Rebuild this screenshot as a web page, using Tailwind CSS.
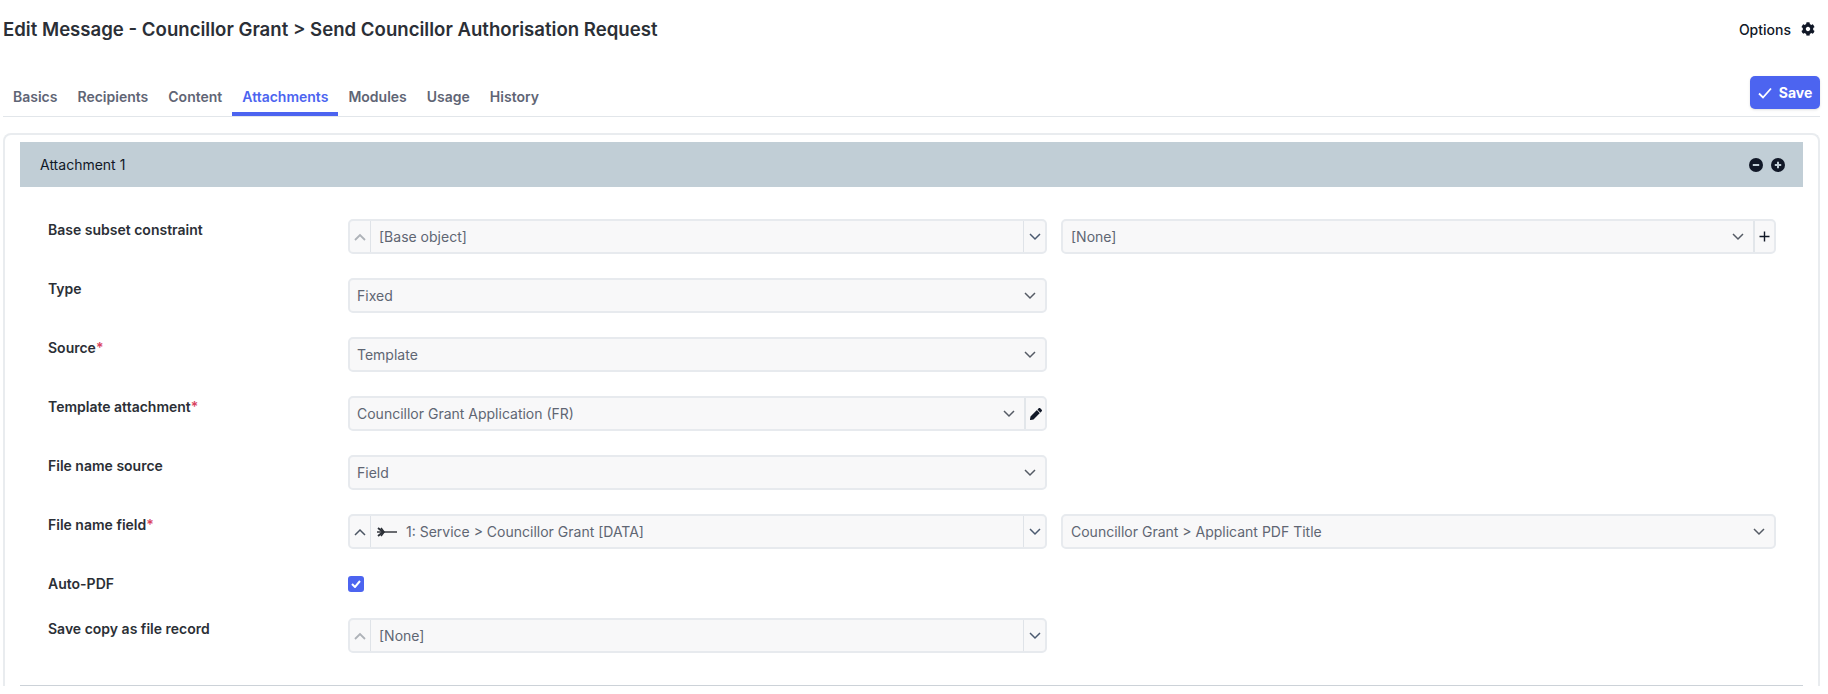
<!DOCTYPE html>
<html lang="en">
<head>
  <meta charset="UTF-8" />
  <title>Edit Message</title>
  <script src="https://cdn.jsdelivr.net/npm/@tailwindcss/browser@4"></script>
</head>
<body class="h-[694px] overflow-hidden bg-white font-['Inter',sans-serif] text-[#2b2f36]">
  <div class="pl-[3px] pr-[8px]">
    <!-- header -->
    <div class="flex h-[58px] items-center justify-between">
      <h1 class="pt-[2px] text-[18.6px] font-semibold">Edit Message - Councillor Grant &gt; Send Councillor Authorisation Request</h1>
      <div class="mr-[5px] flex items-center gap-[10px] text-[14px] font-medium text-[#111827]">
        Options
        <svg class="h-[14px] w-[14px]" viewBox="0 0 512 512" fill="#111827"><path d="M487.4 315.7l-42.6-24.6c4.3-23.2 4.3-47 0-70.2l42.6-24.6c4.9-2.8 7.1-8.6 5.5-14-11.1-35.6-30-67.8-54.7-94.6-3.8-4.1-10-5.1-14.8-2.3L380.8 110c-17.9-15.4-38.5-27.3-60.8-35.1V25.8c0-5.6-3.9-10.5-9.4-11.7-36.7-8.2-74.3-7.8-109.2 0-5.5 1.2-9.4 6.1-9.4 11.7V75c-22.2 7.9-42.8 19.8-60.8 35.1L88.7 85.5c-4.9-2.8-11-1.9-14.8 2.3-24.7 26.7-43.6 58.9-54.7 94.6-1.7 5.4.6 11.2 5.5 14L67.3 221c-4.3 23.2-4.3 47 0 70.2l-42.6 24.6c-4.9 2.8-7.1 8.6-5.5 14 11.1 35.6 30 67.8 54.7 94.6 3.8 4.1 10 5.1 14.8 2.3l42.6-24.6c17.9 15.4 38.5 27.3 60.8 35.1v49.2c0 5.6 3.9 10.5 9.4 11.7 36.7 8.2 74.3 7.8 109.2 0 5.5-1.2 9.4-6.1 9.4-11.7v-49.2c22.2-7.9 42.8-19.8 60.8-35.1l42.6 24.6c4.9 2.8 11 1.9 14.8-2.3 24.7-26.7 43.6-58.9 54.7-94.6 1.5-5.5-.7-11.3-5.6-14.1zM256 336c-44.1 0-80-35.9-80-80s35.9-80 80-80 80 35.9 80 80-35.9 80-80 80z"/></svg>
      </div>
    </div>

    <!-- tabs -->
    <div class="flex h-[59px] items-end justify-between border-b border-[#e2e6ea]">
      <div class="flex text-[14px] font-semibold text-[#5f6575]">
        <a class="flex h-[40px] items-center px-[10px]">Basics</a>
        <a class="flex h-[40px] items-center px-[10px]">Recipients</a>
        <a class="flex h-[40px] items-center px-[10px]">Content</a>
        <a class="flex h-[40px] items-center rounded-t-[3px] border-b-4 border-[#4c64f0] px-[10px] pt-[4px] text-[#4c64f0]">Attachments</a>
        <a class="flex h-[40px] items-center px-[10px]">Modules</a>
        <a class="flex h-[40px] items-center px-[10px]">Usage</a>
        <a class="flex h-[40px] items-center px-[10px]">History</a>
      </div>
      <button class="mb-[7px] flex h-[33px] w-[70px] items-center justify-center gap-[7px] rounded-[5px] bg-[#4c64f0] text-[14px] font-bold text-white shadow-sm">
        <svg class="h-[12px] w-[14px]" viewBox="0 0 14 12" fill="none" stroke="white" stroke-width="1.8"><path d="M1 6.5l4 4L13 1.5"/></svg>
        Save
      </button>
    </div>

    <!-- card -->
    <div class="mt-[16px] rounded-t-[8px] border-2 border-b-0 border-[#e9ecef] px-[15px] pt-[7px]">
      <div class="flex h-[45px] items-center justify-between bg-[#c1ced6] pl-[20px] pr-[18px] text-[14px] text-[#111827]">
        Attachment 1
        <div class="flex gap-[8px]">
          <svg class="h-[14px] w-[14px]" viewBox="0 0 14 14"><circle cx="7" cy="7" r="7" fill="#111827"/><path d="M3.8 7h6.4" stroke="#c1ced6" stroke-width="2"/></svg>
          <svg class="h-[14px] w-[14px]" viewBox="0 0 14 14"><circle cx="7" cy="7" r="7" fill="#111827"/><path d="M3.8 7h6.4M7 3.8v6.4" stroke="#c1ced6" stroke-width="2"/></svg>
        </div>
      </div>

      <div class="flex flex-col gap-[24px] pr-[27px] pt-[32px] text-[14px]">
        <!-- Base subset constraint -->
        <div class="flex">
          <label class="w-[328px] shrink-0 pl-[28px] font-semibold">Base subset constraint</label>
          <div class="flex h-[35px] w-[699px] rounded-[5px] border-2 border-[#e7eaee] bg-[#f8f8f9] text-[#5f6673]">
            <div class="flex w-[21px] items-center justify-center border-r border-[#dfe3e8]">
              <svg class="h-[8px] w-[12px]" viewBox="0 0 12 8" fill="none" stroke="#aeb2b8" stroke-width="1.8"><path d="M1 7l5-5 5 5"/></svg>
            </div>
            <div class="flex flex-1 items-center pl-[8px]">[Base object]</div>
            <div class="flex w-[22px] items-center justify-center border-l border-[#dfe3e8]">
              <svg class="h-[8px] w-[12px]" viewBox="0 0 12 8" fill="none" stroke="#4b5a70" stroke-width="1.5"><path d="M1 1l5 5 5-5"/></svg>
            </div>
          </div>
          <div class="ml-[14px] flex h-[35px] flex-1 rounded-[5px] border-2 border-[#e7eaee] bg-[#f8f8f9] text-[#5f6673]">
            <div class="flex flex-1 items-center justify-between pl-[8px] pr-[9px]">
              [None]
              <svg class="h-[8px] w-[12px]" viewBox="0 0 12 8" fill="none" stroke="#555b65" stroke-width="1.5"><path d="M1 1l5 5 5-5"/></svg>
            </div>
            <div class="flex w-[21px] items-center justify-center border-l-2 border-[#e2e6ea]">
              <svg class="h-[11px] w-[11px]" viewBox="0 0 11 11" stroke="#111827" stroke-width="1.4"><path d="M0.5 5.5h10M5.5 0.5v10"/></svg>
            </div>
          </div>
        </div>

        <!-- Type -->
        <div class="flex">
          <label class="w-[328px] shrink-0 pl-[28px] font-semibold">Type</label>
          <div class="flex h-[35px] w-[699px] items-center justify-between rounded-[5px] border-2 border-[#e7eaee] bg-[#f8f8f9] pl-[7px] pr-[9px] text-[#5f6673]">
            Fixed
            <svg class="h-[8px] w-[12px]" viewBox="0 0 12 8" fill="none" stroke="#555b65" stroke-width="1.5"><path d="M1 1l5 5 5-5"/></svg>
          </div>
        </div>

        <!-- Source -->
        <div class="flex">
          <label class="w-[328px] shrink-0 pl-[28px] font-semibold">Source<span class="text-[#d9435f]">*</span></label>
          <div class="flex h-[35px] w-[699px] items-center justify-between rounded-[5px] border-2 border-[#e7eaee] bg-[#f8f8f9] pl-[7px] pr-[9px] text-[#5f6673]">
            Template
            <svg class="h-[8px] w-[12px]" viewBox="0 0 12 8" fill="none" stroke="#555b65" stroke-width="1.5"><path d="M1 1l5 5 5-5"/></svg>
          </div>
        </div>

        <!-- Template attachment -->
        <div class="flex">
          <label class="w-[328px] shrink-0 pl-[28px] font-semibold">Template attachment<span class="text-[#d9435f]">*</span></label>
          <div class="flex h-[35px] w-[699px] rounded-[5px] border-2 border-[#e7eaee] bg-[#f8f8f9] text-[#5f6673]">
            <div class="flex flex-1 items-center justify-between pl-[7px] pr-[9px]">
              Councillor Grant Application (FR)
              <svg class="h-[8px] w-[12px]" viewBox="0 0 12 8" fill="none" stroke="#555b65" stroke-width="1.5"><path d="M1 1l5 5 5-5"/></svg>
            </div>
            <div class="flex w-[21px] items-center justify-center border-l-2 border-[#e2e6ea]">
              <svg class="h-[12px] w-[12px]" viewBox="0 0 512 512" fill="#111827"><path d="M497.9 142.1l-46.1 46.1c-4.7 4.7-12.3 4.7-17 0l-111-111c-4.7-4.7-4.7-12.3 0-17l46.1-46.1c18.7-18.7 49.1-18.7 67.9 0l60.1 60.1c18.8 18.7 18.8 49.1 0 67.9zM284.2 99.8L21.6 362.4.4 483.9c-2.9 16.4 11.4 30.6 27.8 27.8l121.5-21.3 262.6-262.6c4.7-4.7 4.7-12.3 0-17l-111-111c-4.8-4.7-12.4-4.7-17.1 0z"/></svg>
            </div>
          </div>
        </div>

        <!-- File name source -->
        <div class="flex">
          <label class="w-[328px] shrink-0 pl-[28px] font-semibold">File name source</label>
          <div class="flex h-[35px] w-[699px] items-center justify-between rounded-[5px] border-2 border-[#e7eaee] bg-[#f8f8f9] pl-[7px] pr-[9px] text-[#5f6673]">
            Field
            <svg class="h-[8px] w-[12px]" viewBox="0 0 12 8" fill="none" stroke="#555b65" stroke-width="1.5"><path d="M1 1l5 5 5-5"/></svg>
          </div>
        </div>

        <!-- File name field -->
        <div class="flex">
          <label class="w-[328px] shrink-0 pl-[28px] font-semibold">File name field<span class="text-[#d9435f]">*</span></label>
          <div class="flex h-[35px] w-[699px] rounded-[5px] border-2 border-[#e7eaee] bg-[#f8f8f9] text-[#5f6673]">
            <div class="flex w-[21px] items-center justify-center border-r border-[#dfe3e8]">
              <svg class="h-[8px] w-[12px]" viewBox="0 0 12 8" fill="none" stroke="#4b5563" stroke-width="1.5"><path d="M1 7l5-5 5 5"/></svg>
            </div>
            <div class="flex flex-1 items-center pl-[6px]">
              <svg class="mr-[9px] h-[10px] w-[20px]" viewBox="0 0 20 10" fill="none" stroke="#2b2f36"><path d="M0 5h20" stroke-width="1.4"/><path d="M1 1l5 4-5 4" stroke-width="1.8"/><path d="M4 1l3 4-3 4" stroke-width="1.6"/></svg>
              1: Service &gt; Councillor Grant [DATA]
            </div>
            <div class="flex w-[22px] items-center justify-center border-l border-[#dfe3e8]">
              <svg class="h-[8px] w-[12px]" viewBox="0 0 12 8" fill="none" stroke="#4b5a70" stroke-width="1.5"><path d="M1 1l5 5 5-5"/></svg>
            </div>
          </div>
          <div class="ml-[14px] flex h-[35px] flex-1 items-center justify-between rounded-[5px] border-2 border-[#e7eaee] bg-[#f8f8f9] pl-[8px] pr-[9px] text-[#5f6673]">
            Councillor Grant &gt; Applicant PDF Title
            <svg class="h-[8px] w-[12px]" viewBox="0 0 12 8" fill="none" stroke="#555b65" stroke-width="1.5"><path d="M1 1l5 5 5-5"/></svg>
          </div>
        </div>

        <!-- Auto-PDF -->
        <div class="flex h-[21px]">
          <label class="w-[328px] shrink-0 pl-[28px] font-semibold">Auto-PDF</label>
          <div class="mt-[3px] flex h-[16px] w-[16px] items-center justify-center rounded-[3px] bg-[#4c64f0]">
            <svg class="h-[8px] w-[10px]" viewBox="0 0 10 8" fill="none" stroke="white" stroke-width="2"><path d="M1 4l3 3 5-6"/></svg>
          </div>
        </div>

        <!-- Save copy as file record -->
        <div class="flex">
          <label class="w-[328px] shrink-0 pl-[28px] font-semibold">Save copy as file record</label>
          <div class="flex h-[35px] w-[699px] rounded-[5px] border-2 border-[#e7eaee] bg-[#f8f8f9] text-[#5f6673]">
            <div class="flex w-[21px] items-center justify-center border-r border-[#dfe3e8]">
              <svg class="h-[8px] w-[12px]" viewBox="0 0 12 8" fill="none" stroke="#aeb2b8" stroke-width="1.8"><path d="M1 7l5-5 5 5"/></svg>
            </div>
            <div class="flex flex-1 items-center pl-[8px]">[None]</div>
            <div class="flex w-[22px] items-center justify-center border-l border-[#dfe3e8]">
              <svg class="h-[8px] w-[12px]" viewBox="0 0 12 8" fill="none" stroke="#4b5a70" stroke-width="1.5"><path d="M1 1l5 5 5-5"/></svg>
            </div>
          </div>
        </div>
      </div>

      <hr class="mt-[32px] border-t border-[#ccd2d8]" />
    </div>
  </div>
</body>
</html>
